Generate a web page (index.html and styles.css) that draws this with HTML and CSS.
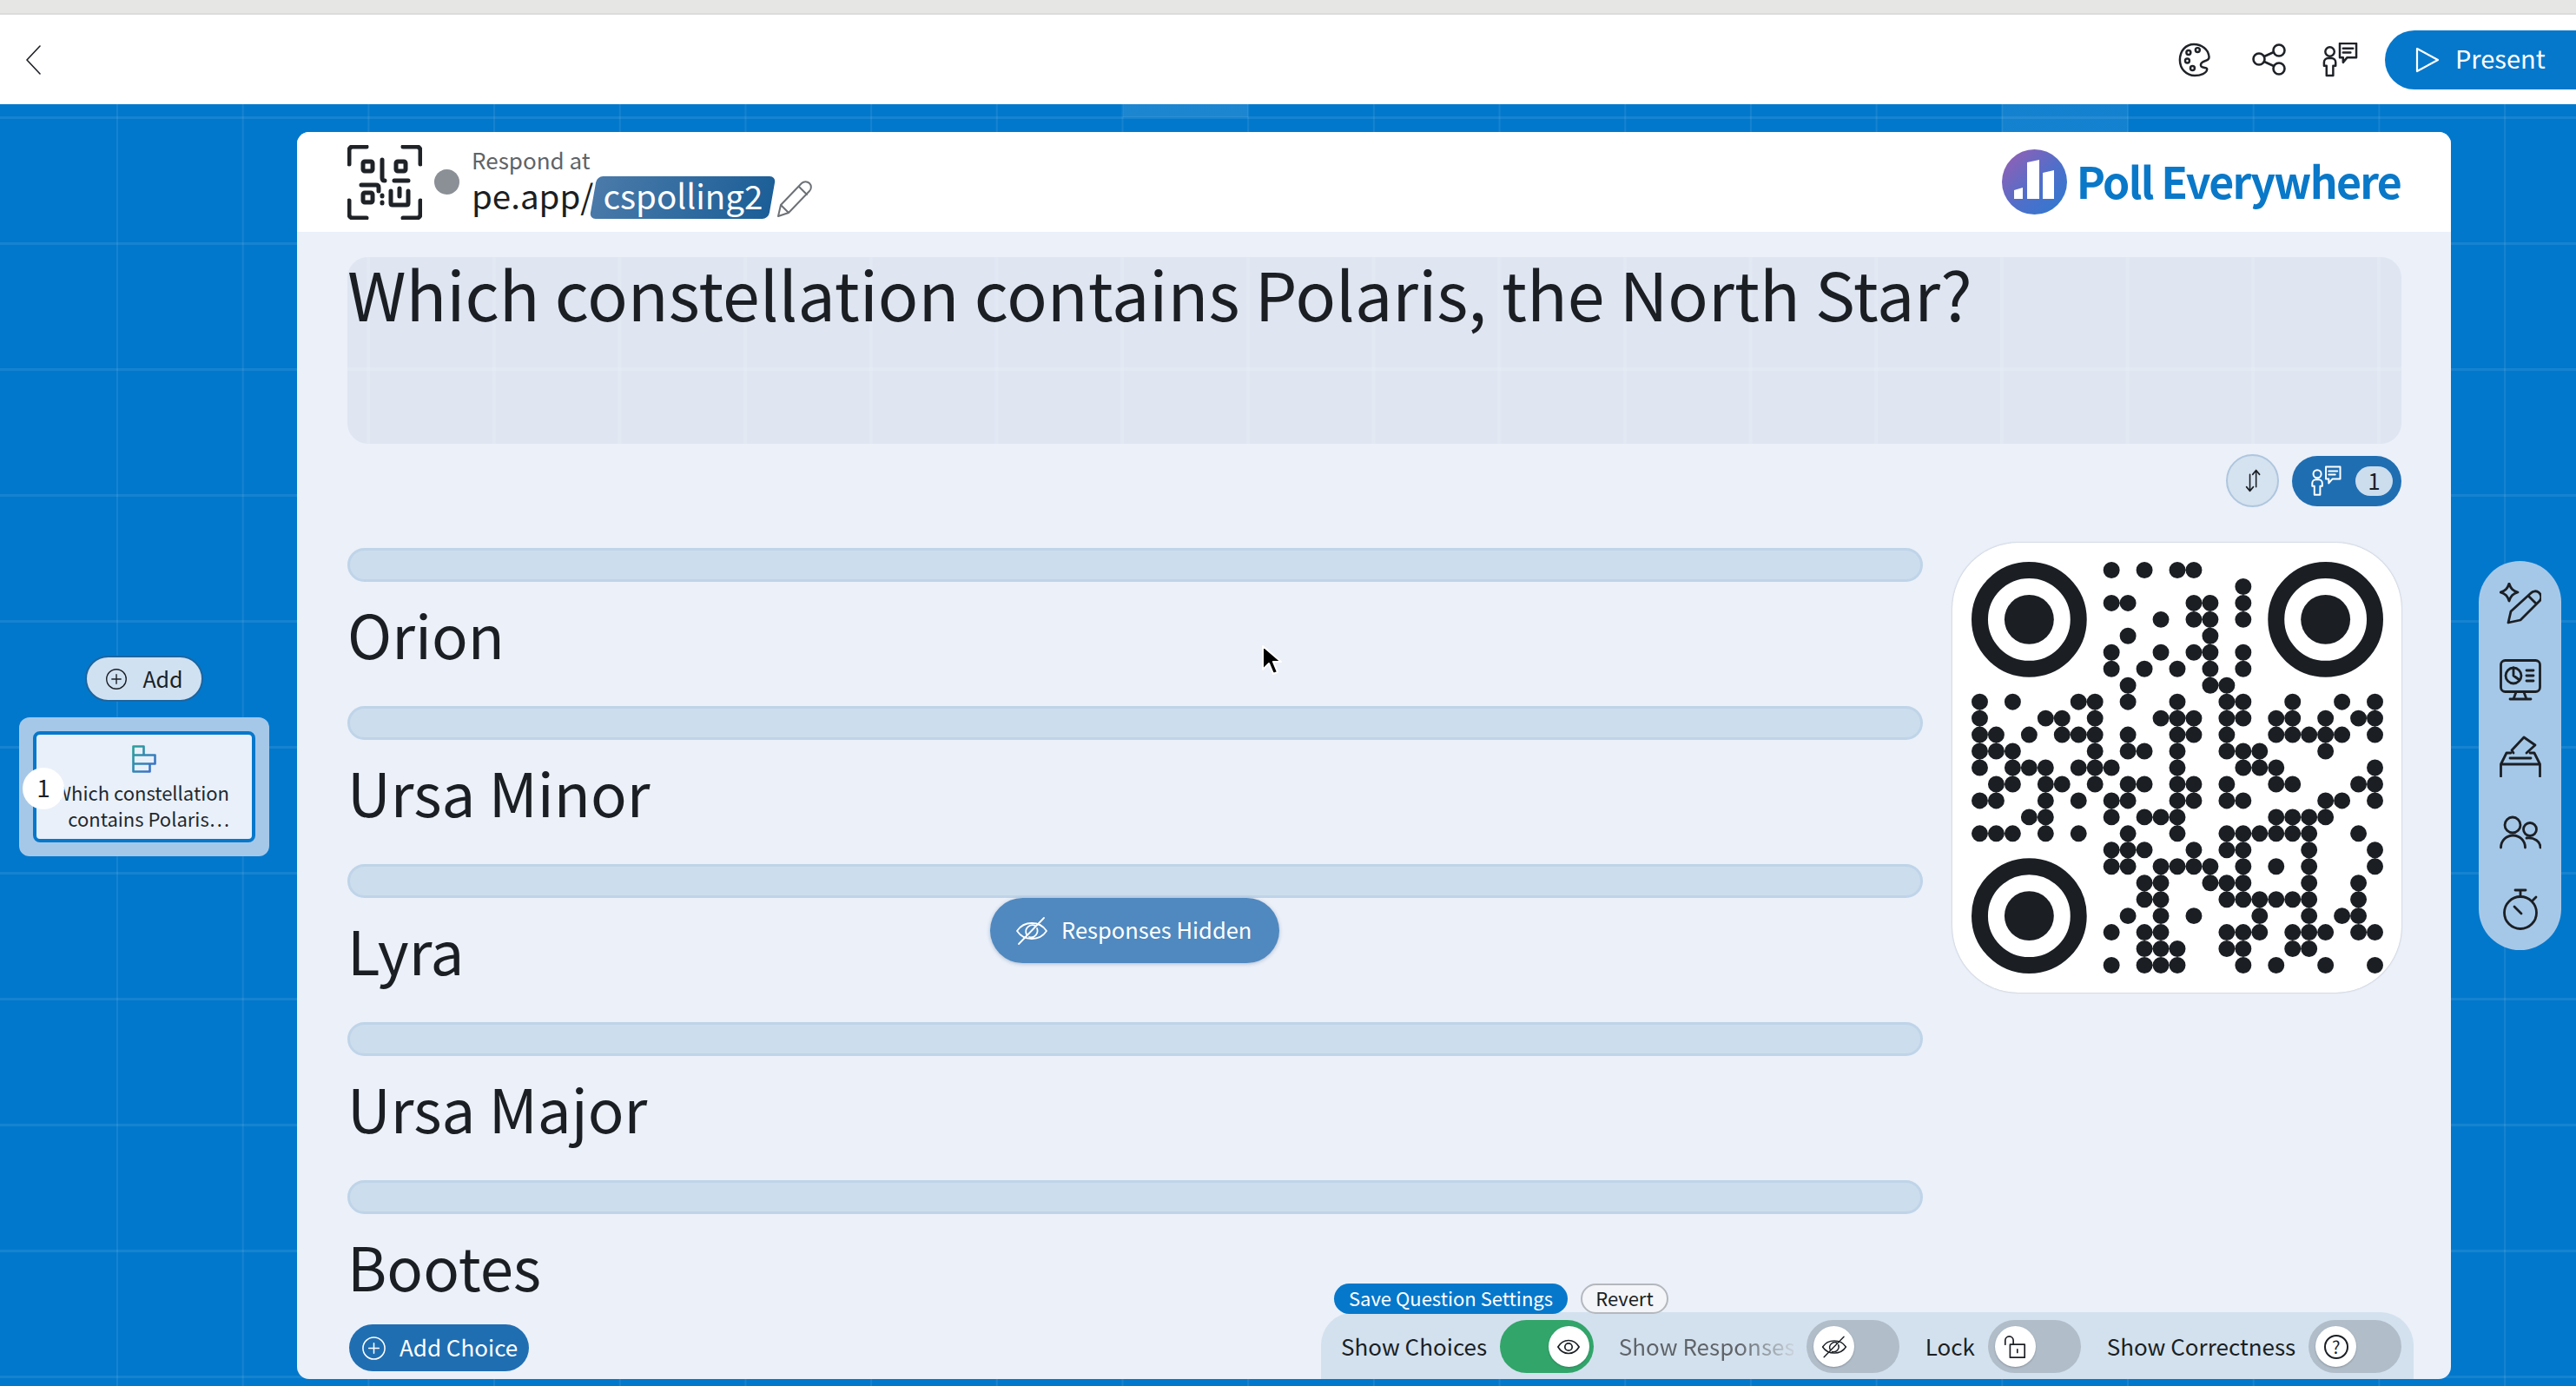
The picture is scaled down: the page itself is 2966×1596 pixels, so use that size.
FILE: index.html
```html
<!DOCTYPE html>
<html lang="en">
<head>
    <meta charset="UTF-8">
    <meta name="viewport" content="width=device-width, initial-scale=1.0">
    <title>Poll Everywhere</title>
    <link rel="stylesheet" href="styles.css">
</head>
<body>
    <svg class="icon-defs" aria-hidden="true">
        <defs>
            <symbol id="i-presenter" viewBox="0 0 46 42">
                <circle cx="11" cy="11" r="5.5"/>
                <path d="M4 28v-4a5 5 0 0 1 5-5h4a5 5 0 0 1 5 5v4h-3v12H7V28z"/>
                <path d="M23 1h20v17H32l-5 6v-6h-4zM27 7h12M27 12h9"/>
            </symbol>
            <symbol id="i-plus" viewBox="0 0 30 30">
                <circle cx="15" cy="15" r="13"/>
                <path d="M15 9v12M9 15h12"/>
            </symbol>
            <symbol id="i-eye-off" viewBox="0 0 38 32">
                <path d="M2 16c4-6 10-9 17-9s13 3 17 9c-4 6-10 9-17 9S6 22 2 16z"/>
                <path d="M13 20a7.500 7.500 0 0 1 10-10M25 13a7.500 7.500 0 0 1-9 10"/>
                <path d="M33 1L4 31"/>
            </symbol>
        </defs>
    </svg>

    <div class="window-strip"></div>

    <header class="topbar">
        <svg class="back" viewBox="0 0 18 34"><path d="M17 1L2 17l15 16"/></svg>
        <div class="top-actions">
            <svg class="top-icon palette" viewBox="0 0 40 42">
                <path d="M19 2C9 2 2 10 2 21s8 19 18 19c7 0 15-3 15-8 0-2-5-1-7-3-2-3 1-6 5-7 4-1 5-3 4-7C36 9 29 2 19 2z"/>
                <circle cx="12.500" cy="12" r="2.600"/><circle cx="23.500" cy="9" r="2.600"/>
                <circle cx="11" cy="22" r="2.600"/><circle cx="17.300" cy="31" r="2.600"/>
            </svg>
            <svg class="top-icon share" viewBox="0 0 40 40">
                <circle cx="9" cy="19" r="6.500"/><circle cx="32" cy="9" r="6.500"/><circle cx="32" cy="30" r="6.500"/>
                <path d="M15 16l11-5M15 22l11 5"/>
            </svg>
            <svg class="top-icon presenter"><use href="#i-presenter"/></svg>
            <button class="present">
                <svg viewBox="0 0 28 30"><path d="M2 2l24 13L2 28z"/></svg>
                Present
            </button>
        </div>
    </header>

    <main class="stage">
        <aside class="slides">
            <button class="add-slide"><svg><use href="#i-plus"/></svg>Add</button>
            <div class="slide-panel">
                <div class="slide-thumb">
                    <span class="slide-num">1</span>
                    <svg class="slide-type" viewBox="0 0 28 32">
                        <defs>
                            <linearGradient id="typeGrad" x1="0" y1="0" x2="1" y2="1">
                                <stop offset="0" stop-color="#2aa09a"/>
                                <stop offset="1" stop-color="#3f6cd0"/>
                            </linearGradient>
                        </defs>
                        <path d="M1.500 1.500h12v10h-12zM1.500 11.500h25v10h-25zM1.500 21.500h19v9h-19z"/>
                    </svg>
                    <p>Which constellation<br>contains Polaris…</p>
                </div>
            </div>
        </aside>

        <section class="card">
            <div class="card-head">
                <div class="respond">
                    <svg class="qr-icon" viewBox="0 0 86 86">
                        <path d="M2 22V6a4 4 0 0 1 4-4h16M64 2h16a4 4 0 0 1 4 4v16M2 64v16a4 4 0 0 0 4 4h16M64 84h16a4 4 0 0 0 4-4V64"/>
                        <rect x="18" y="19" width="11" height="11" rx="2"/>
                        <rect x="56" y="19" width="11" height="11" rx="2"/>
                        <rect x="18" y="55" width="11" height="11" rx="2"/>
                        <path d="M40 17v21q0 3 3 3M54 41h16M16 46h17q3 0 3 3v4M40 58v1M40 66v1M50 53v14q0 2 2 2h16q2 0 2-2V53M60 50v9"/>
                    </svg>
                    <span class="status-dot"></span>
                    <div class="respond-text">
                        <div class="respond-label">Respond at</div>
                        <div class="respond-url">pe.app/<span class="slug"><span>cspolling2</span></span></div>
                    </div>
                    <svg class="pencil" viewBox="0 0 42 42">
                        <path d="M2 41l3-13L29 3a5 5 0 0 1 9 9L14 37zM5 28l9 9M26 7l9 9"/>
                    </svg>
                </div>
                <div class="logo">
                    <svg viewBox="0 0 75 75">
                        <defs>
                            <linearGradient id="logoGrad" x1="0" y1="0" x2="1" y2="1">
                                <stop offset="0" stop-color="#9c5db2"/>
                                <stop offset="0.55" stop-color="#4f6fca"/>
                                <stop offset="1" stop-color="#2b7ad0"/>
                            </linearGradient>
                        </defs>
                        <circle cx="37.500" cy="37.500" r="37.500" fill="url(#logoGrad)"/>
                        <path d="M14 47l10-3v13H14zM29 15l14-3v45H29zM47 27l13-3v33H47z" fill="#fff"/>
                    </svg>
                    <span>Poll Everywhere</span>
                </div>
            </div>

            <div class="card-body">
                <h1 class="question">Which constellation contains Polaris, the North Star?</h1>

                <div class="question-tools">
                    <button class="round-tool">
                        <svg viewBox="0 0 24 34"><path d="M16 2v24M11 8l5-6 5 6M7 8v24M2 26l5 6 5-6"/></svg>
                    </button>
                    <button class="presenter-pill">
                        <svg><use href="#i-presenter"/></svg>
                        <span>1</span>
                    </button>
                </div>

                <div class="poll">
                    <div class="choices">
                        <div class="choice"><div class="bar"></div><div class="choice-label">Orion</div></div>
                        <div class="choice"><div class="bar"></div><div class="choice-label">Ursa Minor</div></div>
                        <div class="choice"><div class="bar"></div><div class="choice-label">Lyra</div></div>
                        <div class="choice"><div class="bar"></div><div class="choice-label">Ursa Major</div></div>
                        <div class="choice choice-last"><div class="bar"></div><div class="choice-label">Bootes</div></div>
                        <button class="add-choice"><svg><use href="#i-plus"/></svg>Add Choice</button>
                        <div class="hidden-pill"><svg><use href="#i-eye-off"/></svg>Responses Hidden</div>
                    </div>

                    <div class="qr-card">
                        <svg viewBox="-0.5 -0.5 25 25">
                            <g class="qr-finder">
                                <circle cx="3" cy="3" r="3"/><circle cx="21" cy="3" r="3"/><circle cx="3" cy="21" r="3"/>
                            </g>
                            <circle cx="3" cy="3" r="1.500"/><circle cx="21" cy="3" r="1.500"/><circle cx="3" cy="21" r="1.500"/>
                            <path class="qr-dots" d="
                                M8 0h0M10 0h0M12 0h0M13 0h0
                                M16 1h0
                                M8 2h0M9 2h0M13 2h0M14 2h0M16 2h0
                                M11 3h0M13 3h0M14 3h0M16 3h0
                                M9 4h0M14 4h0
                                M8 5h0M11 5h0M13 5h0M14 5h0M16 5h0
                                M8 6h0M10 6h0M12 6h0M14 6h0M16 6h0
                                M9 7h0M14 7h0M15 7h0
                                M0 8h0M2 8h0M6 8h0M7 8h0M9 8h0M12 8h0M15 8h0M16 8h0M19 8h0M22 8h0M24 8h0
                                M0 9h0M4 9h0M5 9h0M7 9h0M11 9h0M12 9h0M13 9h0M15 9h0M16 9h0M18 9h0M19 9h0M21 9h0M23 9h0M24 9h0
                                M0 10h0M1 10h0M3 10h0M5 10h0M6 10h0M7 10h0M9 10h0M12 10h0M13 10h0M15 10h0M18 10h0M19 10h0M20 10h0M21 10h0M22 10h0M24 10h0
                                M0 11h0M1 11h0M2 11h0M7 11h0M9 11h0M10 11h0M12 11h0M15 11h0M16 11h0M17 11h0M21 11h0
                                M0 12h0M2 12h0M3 12h0M4 12h0M6 12h0M7 12h0M8 12h0M12 12h0M16 12h0M17 12h0M18 12h0M24 12h0
                                M1 13h0M2 13h0M4 13h0M5 13h0M7 13h0M9 13h0M10 13h0M12 13h0M13 13h0M15 13h0M18 13h0M19 13h0M23 13h0M24 13h0
                                M0 14h0M1 14h0M4 14h0M6 14h0M8 14h0M9 14h0M12 14h0M13 14h0M15 14h0M16 14h0M21 14h0M22 14h0M24 14h0
                                M3 15h0M4 15h0M8 15h0M10 15h0M11 15h0M12 15h0M18 15h0M19 15h0M20 15h0M21 15h0
                                M0 16h0M1 16h0M2 16h0M4 16h0M6 16h0M9 16h0M12 16h0M15 16h0M16 16h0M17 16h0M18 16h0M19 16h0M20 16h0M23 16h0
                                M8 17h0M9 17h0M10 17h0M13 17h0M15 17h0M16 17h0M20 17h0M24 17h0
                                M8 18h0M9 18h0M11 18h0M12 18h0M13 18h0M14 18h0M16 18h0M18 18h0M20 18h0M24 18h0
                                M10 19h0M11 19h0M14 19h0M15 19h0M16 19h0M20 19h0M23 19h0
                                M10 20h0M11 20h0M15 20h0M16 20h0M17 20h0M18 20h0M19 20h0M20 20h0M23 20h0
                                M9 21h0M11 21h0M13 21h0M17 21h0M20 21h0M22 21h0M23 21h0
                                M8 22h0M10 22h0M11 22h0M15 22h0M16 22h0M17 22h0M19 22h0M20 22h0M21 22h0M23 22h0M24 22h0
                                M10 23h0M11 23h0M12 23h0M15 23h0M16 23h0M19 23h0M20 23h0
                                M8 24h0M10 24h0M11 24h0M12 24h0M16 24h0M18 24h0M21 24h0M24 24h0"/>
                        </svg>
                    </div>
                </div>
            </div>

            <div class="settings">
                <div class="settings-actions">
                    <button class="save">Save Question Settings</button>
                    <button class="revert">Revert</button>
                </div>
                <div class="toggles">
                    <span class="toggle-label">Show Choices</span>
                    <div class="toggle on">
                        <span class="knob">
                            <svg viewBox="0 0 30 20"><path d="M2 10c3-5 8-8 13-8s10 3 13 8c-3 5-8 8-13 8S5 15 2 10z"/><circle cx="15" cy="10" r="4.500"/></svg>
                        </span>
                    </div>
                    <span class="toggle-label faded">Show Responses</span>
                    <div class="toggle">
                        <span class="knob"><svg class="eye-off"><use href="#i-eye-off"/></svg></span>
                    </div>
                    <span class="toggle-label">Lock</span>
                    <div class="toggle">
                        <span class="knob">
                            <svg viewBox="0 0 30 30"><path d="M3 12V7a5 5 0 0 1 10 0v5"/><path d="M9 12h18v16H9zM18 18v4"/></svg>
                        </span>
                    </div>
                    <span class="toggle-label">Show Correctness</span>
                    <div class="toggle">
                        <span class="knob"><span class="help">?</span></span>
                    </div>
                </div>
            </div>

            <svg class="cursor" viewBox="0 0 24 38"><path d="M2 2v27l7-7 5 12 5-2-5-12h9z"/></svg>
        </section>

        <nav class="rail">
            <svg viewBox="0 0 48 48">
                <path d="M11 1c2 6 4 8 10 10-6 2-8 4-10 10-2-6-4-8-10-10 6-2 8-4 10-10z"/>
                <path d="M10 46l14-3 22-22a6.500 6.500 0 0 0-10-9L13 33zM33 15l9 9"/>
            </svg>
            <svg viewBox="0 0 48 48">
                <rect x="1.500" y="1.500" width="45" height="36" rx="5"/>
                <circle cx="16" cy="19" r="9"/>
                <path d="M16 10v9l7 5M31 13h8M31 19h8M31 25h8M19 38l-3 8M28 38l3 8M12 46h24"/>
            </svg>
            <svg viewBox="0 0 48 48">
                <path d="M1.500 47V33L8 20h5M46.500 47V33L40 20h-5M1.500 33h45M12 26h24"/>
                <path d="M16 20l-2-3L28 2l13 9-10 9"/>
            </svg>
            <svg viewBox="0 0 48 38">
                <circle cx="15" cy="10" r="9"/>
                <path d="M1.500 36a14 14 0 0 1 28 0"/>
                <circle cx="35" cy="15" r="7.500"/>
                <path d="M31 25c9-1 16 4 16 11"/>
            </svg>
            <svg class="watch" viewBox="0 0 40 48">
                <circle cx="20" cy="28" r="18.500"/>
                <path d="M14 2h12M20 2v7M34 14l4-4M13 21l8 8"/>
            </svg>
        </nav>
    </main>
</body>
</html>
```

FILE: styles.css
```css
* { box-sizing: border-box; }

html, body { margin: 0; padding: 0; }

body {
    width: 2966px;
    height: 1596px;
    overflow: hidden;
    display: flex;
    flex-direction: column;
    font-family: "Noto Sans CJK JP", "Noto Sans", sans-serif;
    color: #1b1f24;
}

button { font-family: inherit; border: none; padding: 0; }

.icon-defs { width: 0; height: 0; position: absolute; }

svg { fill: none; stroke: currentColor; stroke-linecap: round; stroke-linejoin: round; flex: none; }

/* top */
.window-strip { height: 17px; background: #e6e6e4; border-bottom: 2px solid #dcdcdc; }

.topbar {
    height: 103px;
    background: #fff;
    display: flex;
    align-items: center;
    justify-content: space-between;
    padding-left: 29px;
}

.back { width: 18px; height: 34px; stroke-width: 1.6; }

.top-actions { display: flex; align-items: center; }

.top-icon { stroke-width: 2.6; color: #1f2328; }
.palette { width: 38px; height: 40px; margin-right: 46px; }
.share { width: 40px; height: 40px; margin-right: 40px; }
.presenter { width: 44px; height: 40px; margin-right: 30px; }

.present {
    width: 220px;
    height: 68px;
    border-radius: 34px 0 0 34px;
    background: #0678cb;
    color: #fff;
    font-size: 29px;
    line-height: 64px;
    display: flex;
    align-items: center;
    gap: 18px;
    padding: 0 0 5px 35px;
}

.present svg { width: 28px; height: 30px; stroke-width: 2.2; margin-top: 5px; }

/* blue canvas with faint grid */
.stage {
    flex: 1;
    display: flex;
    align-items: flex-start;
    min-height: 0;
    background-color: #0278cc;
    background-image:
        linear-gradient(rgba(255,255,255,.1), rgba(255,255,255,.1)),
        linear-gradient(rgba(255,255,255,.07), rgba(255,255,255,.07)),
        linear-gradient(to right, rgba(255,255,255,.08) 2px, transparent 2px),
        linear-gradient(to bottom, rgba(255,255,255,.08) 3px, transparent 3px);
    background-size: 144px 15px, 145px 32px, 144.7px 145px, 144.7px 145px;
    background-position: 1293px 0, 2305px 0, 134px 0, 0 14px;
    background-repeat: no-repeat, no-repeat, repeat, repeat;
}

/* slide list */
.slides {
    width: 342px;
    padding: 635px 32px 0 22px;
    display: flex;
    flex-direction: column;
    align-items: center;
}

.add-slide {
    width: 136px;
    height: 53px;
    border: 2px solid #1d659f;
    border-radius: 27px;
    background: #d0e1f2;
    color: #1b1f24;
    font-size: 25px;
    line-height: 44px;
    display: flex;
    align-items: center;
    justify-content: center;
    gap: 17px;
    padding-bottom: 2px;
}

.add-slide svg { width: 26px; height: 26px; stroke-width: 1.6; margin-top: 2px; }

.slide-panel {
    width: 288px;
    height: 160px;
    margin-top: 18px;
    padding: 16px;
    border-radius: 12px;
    background: #a6c8e8;
}

.slide-thumb {
    position: relative;
    height: 128px;
    border: 4px solid #0678cb;
    border-radius: 8px;
    background: #e9f0f9;
    padding-top: 12px;
}

.slide-type { display: block; width: 28px; height: 32px; margin: 0 auto 0 110px; stroke: url(#typeGrad); stroke-width: 2.6; }

.slide-thumb p {
    margin: 7px 0 0;
    padding-right: 26px;
    font-size: 22px;
    line-height: 30px;
    text-align: right;
    color: #24282d;
}

.slide-num {
    position: absolute;
    left: -16px;
    top: 38px;
    width: 48px;
    height: 48px;
    border-radius: 50%;
    background: #fff;
    font-size: 28px;
    line-height: 44px;
    text-align: center;
}

/* main card */
.card {
    position: relative;
    width: 2480px;
    height: 1436px;
    margin-top: 32px;
    border-radius: 14px;
    overflow: hidden;
    background: #ebf0f9;
}

.card-head {
    height: 115px;
    background: #fff;
    display: flex;
    align-items: center;
    justify-content: space-between;
    padding: 0 58px;
}

.respond { display: flex; align-items: center; }

.qr-icon { width: 86px; height: 86px; stroke-width: 5; color: #1f2328; }

.status-dot { width: 29px; height: 29px; margin: 0 14px 0 14px; border-radius: 50%; background: #8b8f96; }

.respond-text { width: 351px; margin-top: -2px; }

.respond-label { font-size: 26px; line-height: 34px; color: #5f6368; }

.respond-url { font-size: 38.5px; line-height: 46px; height: 49px; display: flex; color: #1b1f24; }

.slug { position: relative; height: 49px; padding: 0 11px; color: #fff; z-index: 0; }

.slug::before {
    content: "";
    position: absolute;
    inset: 2px 0 -2px 0;
    z-index: -1;
    border-radius: 7px;
    background: linear-gradient(100deg, #4a7aa9, #1b5e97);
    transform: skewX(-10deg);
}

.pencil { width: 42px; height: 42px; margin-top: 39px; stroke-width: 2; color: #6d7176; }

.logo { display: flex; align-items: center; gap: 11px; }

.logo svg { width: 75px; height: 75px; stroke: none; }

.logo span { font-size: 50px; line-height: 71px; padding-bottom: 4px; font-weight: 700; color: #0a78c8; letter-spacing: -1.75px; }

.card-body { padding: 29px 57px 0 58px; }

.question {
    height: 215px;
    margin: 0;
    padding: 0;
    border-radius: 24px;
    background-color: #dfe6f2;
    background-image:
        linear-gradient(to right, rgba(255,255,255,.1) 4px, transparent 4px),
        linear-gradient(to bottom, rgba(255,255,255,.1) 4px, transparent 4px);
    background-size: 144.7px 145px;
    background-position: 22px 127px;
    font-size: 77px;
    font-weight: 400;
    line-height: 82px;
    color: #1b1f24;
}

.question-tools {
    display: flex;
    justify-content: flex-end;
    align-items: center;
    gap: 15px;
    margin-top: 12px;
    height: 61px;
}

.round-tool {
    width: 61px;
    height: 61px;
    border: 2px solid #aec6de;
    border-radius: 50%;
    background: #d5e2ef;
    color: #1b1f24;
    display: flex;
    align-items: center;
    justify-content: center;
}

.round-tool svg { width: 19px; height: 29px; stroke-width: 2; margin-left: 2px; }

.presenter-pill {
    width: 126px;
    height: 58px;
    border-radius: 29px;
    background: #206eb2;
    color: #fff;
    display: flex;
    align-items: center;
    gap: 15px;
    padding-left: 20px;
}

.presenter-pill svg { width: 38px; height: 36px; stroke-width: 2.4; }

.presenter-pill span {
    width: 43px;
    height: 34px;
    border-radius: 17px;
    background: #ccdded;
    color: #1b1f24;
    font-size: 26px;
    line-height: 32px;
}

.poll { display: flex; gap: 34px; margin-top: 41px; align-items: flex-start; }

.choices { position: relative; width: 1814px; padding-top: 6px; }

.choice { height: 182px; }

.choice-last { height: 166px; }

.bar {
    height: 39px;
    border: 3px solid #bfd4e8;
    border-radius: 20px;
    background: #ccdded;
}

.choice-label { font-size: 69px; line-height: 100px; padding-top: 9px; color: #1b1f24; }

.add-choice {
    width: 207px;
    height: 54px;
    margin-left: 2px;
    border-radius: 27px;
    background: #206eb2;
    color: #fff;
    font-size: 26px;
    line-height: 44px;
    display: flex;
    align-items: center;
    gap: 15px;
    padding: 0 0 3px 14px;
}

.add-choice svg { width: 29px; height: 29px; stroke-width: 1.6; margin-top: 3px; }

.hidden-pill {
    position: absolute;
    left: 740px;
    top: 409px;
    width: 333px;
    height: 75px;
    border-radius: 38px;
    background: #5089c0;
    box-shadow: 0 1px 4px rgba(60,90,130,.35);
    color: #fff;
    font-size: 25.5px;
    line-height: 44px;
    display: flex;
    align-items: center;
    gap: 15px;
    padding: 0 0 4px 29px;
}

.hidden-pill svg { width: 38px; height: 32px; stroke-width: 1.8; margin-top: 4px; }

.qr-card {
    width: 517px;
    height: 518px;
    border-radius: 76px;
    background: #fff;
    box-shadow: 0 0 2px rgba(60,70,90,.4);
    padding: 22px 21px 22px 22px;
}

.qr-card svg { display: block; width: 474px; height: 474px; stroke: none; fill: #1b1f24; }

.qr-finder { fill: none; stroke: #1b1f24; stroke-width: 1; }

.qr-dots { fill: none; stroke: #1b1f24; stroke-width: 1; stroke-linecap: round; }

/* bottom settings, floats over the card */
.settings {
    position: absolute;
    right: 43px;
    bottom: 0;
    width: 1258px;
}

.settings-actions { display: flex; gap: 15px; padding-left: 15px; margin-bottom: -2px; position: relative; }

.save, .revert { height: 35px; border-radius: 18px; font-size: 22px; line-height: 28px; padding-bottom: 4px; }

.save { width: 269px; background: #0678cb; color: #fff; }

.revert { width: 101px; border: 2px solid #b4b8bd; background: #f3f5f9; color: #1b1f24; }

.toggles {
    height: 77px;
    border-radius: 38px 38px 0 0;
    background: #d3e1ee;
    display: flex;
    align-items: center;
    padding: 2px 14px 0 23px;
}

.toggle-label { font-size: 26px; line-height: 36px; white-space: nowrap; margin-right: 15px; color: #1b1f24; padding-bottom: 2px; }

.toggle-label.faded {
    width: 202px;
    overflow: hidden;
    color: transparent;
    background: linear-gradient(to right, #5f6368 68%, #c9d2db 100%);
    -webkit-background-clip: text;
    background-clip: text;
}

.toggle {
    width: 107px;
    height: 61px;
    margin-right: 30px;
    border-radius: 31px;
    background: #b1bdc9;
    display: flex;
    align-items: center;
    padding: 0 8px;
}

.toggle:last-child { margin-right: 0; }

.toggle.on { width: 108px; background: #32a56a; justify-content: flex-end; padding-right: 5px; margin-right: 29px; }

.knob {
    width: 47px;
    height: 47px;
    border-radius: 50%;
    background: #fff;
    box-shadow: 0 1px 2px rgba(40,50,60,.3);
    color: #1b1f24;
    display: flex;
    align-items: center;
    justify-content: center;
}

.knob svg { width: 28px; height: 28px; stroke-width: 1.8; }

.knob svg.eye-off { width: 30px; height: 26px; }

.help {
    width: 28px;
    height: 28px;
    border: 2px solid #1b1f24;
    border-radius: 50%;
    font-size: 20px;
    line-height: 23px;
    text-align: center;
}

.cursor {
    position: absolute;
    left: 1110px;
    top: 590px;
    width: 24px;
    height: 38px;
    fill: #000;
    stroke: #fff;
    stroke-width: 2;
}

/* tool rail */
.rail {
    width: 95px;
    height: 448px;
    margin: 526px 0 0 32px;
    border-radius: 48px;
    background: #a6c8e8;
    color: #1b1f24;
    display: flex;
    flex-direction: column;
    align-items: center;
    padding-top: 25px;
    gap: 40px;
}

.rail svg { width: 48px; height: 48px; stroke-width: 2.8; }
.rail svg.watch { width: 40px; }
```
